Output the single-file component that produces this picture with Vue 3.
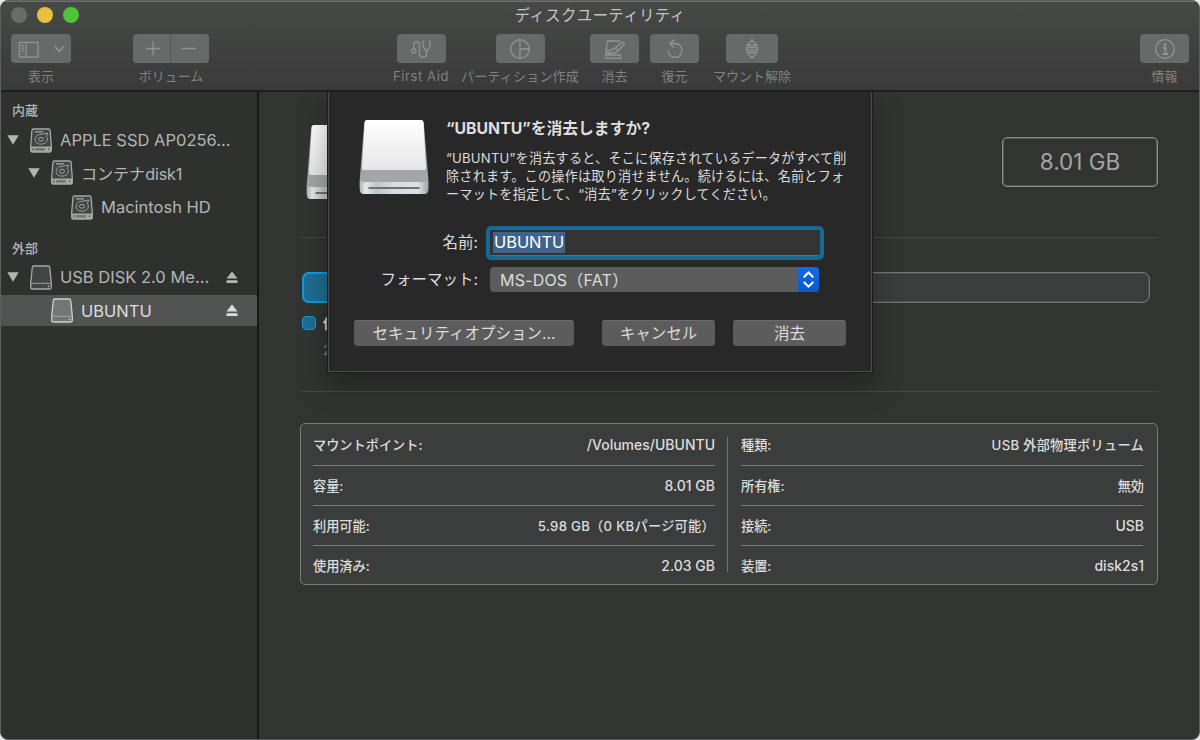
<template>
  <div class="window">
    <header class="header">
      <div class="titlebar">
        <div class="lights">
          <i class="light"></i>
          <i class="light yellow"></i>
          <i class="light green"></i>
        </div>
        <div class="title">ディスクユーティリティ</div>
      </div>
      <div class="toolbar">
        <div class="tool tool-view">
          <button class="tool-btn">
            <svg width="60" height="29" viewBox="0 0 60 29">
              <rect x="8.5" y="8.5" width="18.5" height="14.5" />
              <path d="M15 9V23M10.3 11.5h2.6M10.3 14.2h2.6M10.3 17h2.6" />
              <path class="thick" d="M44 12.700l4.300 4.600L52.600 12.700" />
            </svg>
          </button>
          <span>表示</span>
        </div>
        <div class="tool tool-volume">
          <div class="pair">
            <button class="tool-btn">
              <svg width="37" height="29" viewBox="0 0 37 29"><path d="M13 14.500H27M20 7.500V21.500" /></svg>
            </button>
            <button class="tool-btn">
              <svg width="38" height="29" viewBox="0 0 38 29"><path d="M10.500 14.500H25" /></svg>
            </button>
          </div>
          <span>ボリューム</span>
        </div>
        <div v-for="item in tools" :key="item.name" class="tool" :class="'tool-' + item.name">
          <button class="tool-btn">
            <svg width="24" height="24" viewBox="0 0 24 24">
              <template v-if="item.name == 'aid'">
                <circle cx="4.800" cy="13.800" r="2.200" />
                <path d="M4.800 11.600V8.500C4.800 3.500 10.500 3.500 10.500 8.500V16.500C10.500 21.500 17.500 21.500 17.500 16.500V13" />
                <path d="M15.500 4H14.500C13 4 14 13 17.500 13S22 4 20.500 4H19.500" />
              </template>
              <template v-if="item.name == 'partition'">
                <circle cx="12" cy="12" r="9.300" />
                <path d="M12 2.700V21.300M12 12H21.300" />
              </template>
              <template v-if="item.name == 'erase'">
                <path d="M17 4H4.300L3 13.800C8 13.800 12 11.500 14 9.500L19.500 4.800L21.500 6.800L15.500 13.300L12.500 11.300" />
                <path d="M3 13.800V16H9C13 16 15 14.500 16.500 12.300M3 18H17.500V21.300H3ZM5 18L8 16" />
              </template>
              <template v-if="item.name == 'restore'">
                <path d="M5 13.500C5 17.500 8 20.500 12 20.500C16 20.500 19 17.500 19 13.500C19 9.500 16 6.500 12 6.500H7.500M11.700 2.500L7 6.500L11.500 10.700" />
              </template>
              <template v-if="item.name == 'unmount'">
                <path d="M12 3L17 8.500H7ZM12 21L17 15.500H7ZM6.500 10.700H17.500V13.300H6.500Z" />
              </template>
              <template v-if="item.name == 'info'">
                <circle cx="12" cy="12" r="9.300" />
                <circle class="dot" cx="12" cy="7.500" r="1.500" />
                <path class="thick" d="M10 11H12.500V16.500M9.700 17H15" />
              </template>
            </svg>
          </button>
          <span>{{ item.label }}</span>
        </div>
      </div>
    </header>

    <div class="body">
      <aside class="sidebar">
        <template v-for="group in groups" :key="group.title">
          <h4>{{ group.title }}</h4>
          <div v-for="item in group.items" :key="item.name" class="row" :class="['level' + item.level, { active: item.active }]">
            <svg v-if="item.open" class="arrow" width="12" height="10" viewBox="0 0 12 10"><path d="M0.300 0.300H11.700L6 9.700Z" /></svg>
            <svg v-if="item.type == 'hdd'" class="disk" width="22" height="25" viewBox="0 0 22 25">
              <path class="shell" d="M3.500 1H18.500Q20 1 20.100 2.500L21.300 18V22.500Q21.300 24 19.800 24H2.200Q.7 24 .7 22.500V18L1.900 2.500Q2 1 3.500 1Z" />
              <path class="fillbar" d="M1 18.500H21V22.500Q21 24 19.800 24H2.200Q1 24 1 22.500Z" />
              <path class="line" d="M5 3.900H13" />
              <path class="line thin" d="M17.800 5L11 6.300C3.500 6.500 3 16 10.500 16.200C17.500 16.200 18.500 11 16.300 8.500L17.800 5" />
              <ellipse class="line thin" cx="11" cy="11.300" rx="2.600" ry="1.900" />
              <path class="dark" d="M3 20V22.700M6 20V22.700M8 20V22.700M10 20V22.700M12 20V22.700M14 20V22.700M18.500 20.500V22.200" />
            </svg>
            <svg v-else class="disk" width="22" height="25" viewBox="0 0 22 25">
              <path class="shell" d="M3.700 1H18.300Q19.600 1 19.700 2.500L21.300 18V22.500Q21.300 24 19.800 24H2.200Q.7 24 .7 22.500V18L2.300 2.500Q2.400 1 3.700 1Z" />
              <path class="line thin" d="M1 18.300H21" />
              <circle class="dot" cx="18.500" cy="21.300" r=".8" />
            </svg>
            <span class="name" :class="item.cls">{{ item.name }}</span>
            <svg v-if="item.eject" class="eject" width="12" height="13" viewBox="0 0 12 13"><path d="M6 .5L11.500 7.500H.5ZM.5 9.300H11.500V12H.5Z" /></svg>
          </div>
        </template>
      </aside>

      <main class="main">
        <section class="hero">
          <svg class="drive" width="70" height="76" viewBox="0 0 70 76"><use href="#drive" /></svg>
          <div class="size">8.01 GB</div>
        </section>
        <section class="usage">
          <div class="bar"><div class="used" :style="{ width: usedPercent + '%' }"></div></div>
          <div class="legend">
            <i></i>
            <div><b>使用済み</b><p>2.03 GB</p></div>
          </div>
        </section>
        <section class="info">
          <div v-for="(column, i) in info" :key="i" class="column">
            <div v-for="line in column" :key="line[0]" class="line-row">
              <span>{{ line[0] }}:</span>
              <span :class="line[2]">{{ line[1] }}</span>
            </div>
          </div>
        </section>
      </main>

      <!-- 消去シート -->
      <div class="sheet">
        <div class="message">
          <svg width="70" height="76" viewBox="0 0 70 76">
            <defs>
              <linearGradient id="top" x1="0" y1="0" x2="0" y2="1"><stop offset="0" stop-color="#fff" /><stop offset="1" stop-color="#e6e6e6" /></linearGradient>
              <linearGradient id="front" x1="0" y1="0" x2="1" y2="0"><stop offset="0" stop-color="#a9b3b7" /><stop offset=".08" stop-color="#e3e8ea" /><stop offset=".25" stop-color="#bec6c9" /><stop offset=".5" stop-color="#d7dcde" /><stop offset=".85" stop-color="#dce1e3" /><stop offset="1" stop-color="#9ca5a9" /></linearGradient>
              <g id="drive">
                <path d="M8 1H62Q64.500 1 64.800 4L69.300 60V70Q69.300 75 65 75H5Q.8 75 .8 70V60L5.200 4Q5.500 1 8 1Z" fill="#a3a6a7" />
                <path d="M8 1H62Q64.300 1 64.500 4L67 49Q67 51 65 51H5Q3 51 3 49L5.600 4Q6 1 8 1Z" fill="url(#top)" />
                <path d="M.8 61Q2 63 5 63H65Q68 63 69.300 61V70Q69.300 75 65 75H5Q.8 75 .8 70Z" fill="url(#front)" />
                <path d="M9.500 69H60.500" stroke="#6c7173" stroke-width="2" />
              </g>
            </defs>
            <use href="#drive" />
          </svg>
          <div class="text">
            <h3>“UBUNTU”を消去しますか?</h3>
            <p>“UBUNTU”を消去すると、そこに保存されているデータがすべて削<br>除されます。この操作は取り消せません。続けるには、名前とフォ<br>ーマットを指定して、“消去”をクリックしてください。</p>
          </div>
        </div>
        <div class="field field-name">
          <label>名前:</label>
          <div class="input"><span>{{ name }}</span></div>
        </div>
        <div class="field field-format">
          <label>フォーマット:</label>
          <div class="select">
            <span>MS-DOS（FAT）</span>
            <svg width="21" height="25" viewBox="0 0 21 25"><path d="M6.300 9.700L10.500 5.500L14.700 9.700M6.300 15.500L10.500 19.700L14.700 15.500" /></svg>
          </div>
        </div>
        <div class="actions">
          <button class="security">セキュリティオプション...</button>
          <button>キャンセル</button>
          <button>消去</button>
        </div>
      </div>
    </div>
  </div>
</template>

<script setup>
import { ref } from 'vue'

const name = ref('UBUNTU')
const usedPercent = 25.3

const tools = [
  { name: 'aid', label: 'First Aid' },
  { name: 'partition', label: 'パーティション作成' },
  { name: 'erase', label: '消去' },
  { name: 'restore', label: '復元' },
  { name: 'unmount', label: 'マウント解除' },
  { name: 'info', label: '情報' },
]

const groups = [
  {
    title: '内蔵',
    items: [
      { name: 'APPLE SSD AP0256...', type: 'hdd', level: 1, open: true, cls: 'ssd' },
      { name: 'コンテナdisk1', type: 'hdd', level: 2, open: true, cls: 'container' },
      { name: 'Macintosh HD', type: 'hdd', level: 3 },
    ],
  },
  {
    title: '外部',
    items: [
      { name: 'USB DISK 2.0 Me...', type: 'usb', level: 1, open: true, eject: true },
      { name: 'UBUNTU', type: 'usb', level: 2, eject: true, active: true },
    ],
  },
]

// [項目, 値, クラス]
const info = [
  [
    ['マウントポイント', '/Volumes/UBUNTU', 'latin'],
    ['容量', '8.01 GB', 'latin'],
    ['利用可能', '5.98 GB（0 KBパージ可能）', 'mixed'],
    ['使用済み', '2.03 GB', 'latin'],
  ],
  [
    ['種類', 'USB 外部物理ボリューム', 'mixed'],
    ['所有権', '無効'],
    ['接続', 'USB', 'latin'],
    ['装置', 'disk2s1', 'latin'],
  ],
]
</script>

<style>
body {
  background: #e8e8e8;
}
</style>

<style scoped>
* {
  box-sizing: border-box;
  margin: 0;
}

.window {
  display: flex;
  flex-direction: column;
  width: 1200px;
  height: 740px;
  overflow: hidden;
  border: 1px solid #5d5f5e;
  border-radius: 8px;
  background: #323432;
  color: #dcdddc;
  font-family: Inter, "Noto Sans CJK JP", sans-serif;
  white-space: nowrap;
}

button {
  padding: 0;
  border: 0;
  font-family: inherit;
  color: inherit;
}

svg {
  display: block;
  flex-shrink: 0;
}

.header {
  flex-shrink: 0;
  height: 91px;
  border-top: 1px solid #6f7170;
  border-bottom: 2px solid #1e1f1e;
  background: linear-gradient(#474947, #393a39);
}

.titlebar {
  display: grid;
  grid-template-columns: 200px 1fr 200px;
  align-items: center;
  height: 27px;
}

.lights {
  display: flex;
  gap: 10px;
  padding: 0 0 1px 10px;
}

.light {
  width: 16px;
  height: 16px;
  border-radius: 50%;
  background: #6a6c6b;
}

.yellow {
  background: #e7c03d;
}

.green {
  background: #4fc43b;
}

.title {
  text-align: center;
  font-size: 15.5px;
  line-height: 22px;
  letter-spacing: .3px;
  color: #c3c5c4;
}

.toolbar {
  display: flex;
  padding: 5px 10px 0;
}

.tool {
  display: flex;
  flex-direction: column;
  align-items: center;
  gap: 3px;
  width: 49px;
  font-size: 13px;
  line-height: 20px;
  color: #818382;
}

.tool-view { width: 60px; }
.tool-volume { width: 76px; margin-left: 62px; }
.tool-aid { width: 56px; margin-left: 184px; letter-spacing: .6px; }
.tool-partition { width: 118px; margin-left: 12px; letter-spacing: .2px; }
.tool-erase { margin-left: 11px; }
.tool-restore { margin-left: 11px; }
.tool-unmount { width: 78px; margin-left: 14px; }
.tool-info { margin-left: auto; }

.tool-btn {
  display: flex;
  align-items: center;
  justify-content: center;
  width: 49px;
  height: 29px;
  border-radius: 4px;
  background: #686a69;
}

.tool-view .tool-btn {
  width: 60px;
}

.tool-unmount .tool-btn {
  width: 52px;
}

.tool-btn svg {
  fill: none;
  stroke: #929493;
  stroke-width: 1.3;
}

.tool-btn .thick {
  stroke-width: 1.8;
}

.tool-btn .dot {
  fill: #929493;
  stroke: none;
}

.pair {
  display: flex;
  gap: 1px;
  border-radius: 4px;
  overflow: hidden;
  background: #535554;
}

.pair .tool-btn {
  width: 38px;
  border-radius: 0;
}

.pair .tool-btn:first-child {
  width: 37px;
}

.body {
  position: relative;
  display: flex;
  flex: 1;
}

.sidebar {
  flex-shrink: 0;
  width: 258px;
  padding-top: 8px;
  border-right: 2px solid #151615;
  background: #2f312f;
  color: #b4b6b5;
}

.sidebar h4 {
  padding-left: 11px;
  font-size: 13px;
  font-weight: 500;
  line-height: 21px;
}

.sidebar h4:first-child {
  padding-bottom: 1px;
}

.row {
  display: flex;
  align-items: center;
  height: 34px;
  padding: 0 19px 0 6px;
}

.row + h4 {
  margin-top: 14px;
}

.row.level2:not(.active) {
  height: 33px;
  padding-bottom: 2px;
}

.level2 { padding-left: 27px; }
.level3 { padding-left: 70px; }

h4 + .row {
  margin-top: 1px;
}

.arrow {
  margin-right: 11px;
  fill: #b4b6b5;
}

.active {
  height: 31px;
  padding-left: 50px;
  margin-top: 1px;
  background: #525453;
  color: #dcdedd;
}

.disk {
  margin-right: 8px;
}

.disk .shell {
  fill: #434544;
  stroke: #a7a9a8;
  stroke-width: 1.3;
}

.active .shell {
  fill: #747675;
  stroke: #cfd1d0;
}

.disk .fillbar {
  fill: #a7a9a8;
}

.disk .line {
  fill: none;
  stroke: #a7a9a8;
  stroke-width: 1.4;
}

.disk .thin {
  stroke-width: .9;
}

.disk .dark {
  stroke: #3a3c3b;
  stroke-width: .9;
}

.disk .dot {
  fill: #dcdedd;
}

.name {
  font-size: 16.5px;
}

.container {
  font-size: 16.2px;
  letter-spacing: -.15px;
}

.eject {
  margin-left: auto;
  fill: #b4b6b5;
}

.active .eject {
  fill: #dcdedd;
}

.main {
  flex: 1;
  padding: 0 41px;
}

.hero {
  display: flex;
  justify-content: space-between;
  height: 146px;
  border-bottom: 1px solid #464847;
}

.drive {
  margin: 32px 0 0 6px;
}

.size {
  width: 156px;
  height: 50px;
  margin-top: 45px;
  border: 1px solid #8c8e8d;
  border-radius: 5px;
  box-shadow: inset 0 0 0 1px #555756;
  text-align: center;
  font-size: 22.5px;
  line-height: 48px;
  color: #a3a5a4;
}

.usage {
  height: 154px;
  padding: 34px 8px 0 2px;
  border-bottom: 1px solid #464847;
}

.bar {
  height: 31px;
  border: 1px solid #747675;
  border-radius: 7px;
  background: #3b3d3c;
  box-shadow: inset 0 0 0 1px #4e504f;
}

.used {
  height: 31px;
  margin: -1px;
  border: 2px solid #109ade;
  border-radius: 7px;
  background: #1e6d93;
}

.legend {
  display: flex;
  gap: 7px;
  padding-top: 10px;
}

.legend i {
  width: 14px;
  height: 14px;
  margin-top: 3px;
  border: 1.5px solid #109ade;
  border-radius: 4px;
  background: #1e6d93;
}

.legend b {
  display: block;
  font-size: 13px;
  line-height: 20px;
}

.legend p {
  font-size: 13px;
  line-height: 34px;
  color: #858786;
}

.info {
  display: flex;
  height: 162px;
  margin-top: 31px;
  padding: 0 12px;
  border: 1px solid #7b7d7c;
  border-radius: 5px;
  background: #3b3d3c;
}

.column {
  width: 402px;
}

.column + .column {
  position: relative;
  width: auto;
  flex: 1;
  margin-left: 12px;
  padding: 0 2px 0 14px;
}

.column + .column::before {
  content: "";
  position: absolute;
  left: 0;
  top: 13px;
  height: 135px;
  border-left: 1px solid #747675;
}

.column + .column .line-row span:last-child {
  margin-right: -1px;
}

.line-row {
  display: flex;
  justify-content: space-between;
  align-items: center;
  height: 40px;
  border-bottom: 1px solid #7b7d7c;
  font-size: 13.2px;
  font-weight: 500;
  line-height: 20px;
}

.line-row:first-child {
  height: 42px;
  padding-top: 1px;
}

.line-row:last-child {
  border-bottom: 0;
  height: 39px;
}

.latin {
  font-size: 14px;
}

.mixed {
  font-size: 13.2px;
  letter-spacing: .28px;
}

.sheet {
  position: absolute;
  left: 327px;
  top: 0;
  width: 544px;
  height: 280px;
  padding: 27px 24px 0 25px;
  border: 1px solid #4d4e4e;
  border-top: 0;
  background: #282828;
  box-shadow: 0 0 0 1px #1c1c1c, 0 12px 26px rgba(0, 0, 0, .35);
  clip-path: inset(0 -40px -60px -40px);
}

.message {
  display: flex;
  gap: 17px;
  height: 107px;
  padding-left: 5px;
}

.text h3 {
  font-size: 15.8px;
  font-weight: 700;
  line-height: 20px;
  color: #dedede;
}

.text p {
  margin-top: 10px;
  font-size: 13.1px;
  line-height: 18px;
  letter-spacing: .24px;
}

.field {
  display: flex;
  align-items: center;
  font-size: 15.5px;
  line-height: 24px;
}

.field label {
  width: 124px;
  margin-right: 8px;
  text-align: right;
}

.input {
  width: 338px;
  height: 34px;
  padding: 1px 3px;
  border: 4.500px solid #176a97;
  border-radius: 5px;
  background: #333;
  box-shadow: inset 0 -1px #6a6c6b;
}

.input span {
  display: inline-block;
  padding: 0 1px;
  background: #3f638b;
  font-size: 16.4px;
  line-height: 21px;
  color: #fff;
}

.field-format {
  height: 25px;
  margin-top: 7px;
}

.field-format label {
  margin-right: 12px;
}

.select {
  display: flex;
  justify-content: space-between;
  width: 329px;
  height: 25px;
  padding-left: 10px;
  border-radius: 4px;
  background: #5c5c5c;
  overflow: hidden;
}

.select span {
  font-size: 16px;
  letter-spacing: .2px;
  line-height: 26px;
}

.select svg {
  background: linear-gradient(#126be6, #0b59cb);
  fill: none;
  stroke: #fff;
  stroke-width: 2;
  stroke-linecap: round;
}

.actions {
  display: flex;
  gap: 18px;
  margin-top: 28px;
}

.actions button {
  flex-shrink: 0;
  width: 113px;
  height: 26px;
  border-radius: 4px;
  background: #5c5c5c;
  box-shadow: inset 0 1px #6b6b6b;
  font-size: 15.5px;
  line-height: 25px;
}

.actions .security {
  width: 220px;
  margin-right: 10px;
}
</style>
